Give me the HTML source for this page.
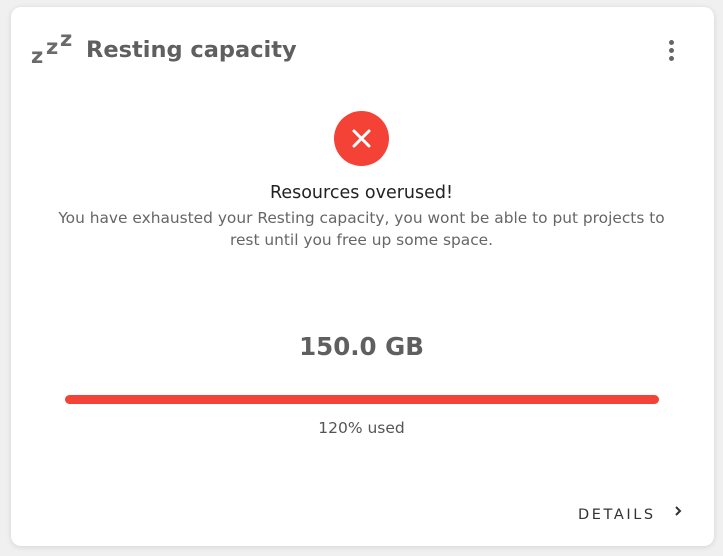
<!DOCTYPE html>
<html><head><style>
html,body{margin:0;padding:0;}
body{width:723px;height:556px;background:#f0f0f0;font-family:"DejaVu Sans",sans-serif;position:relative;overflow:hidden;}
.card{position:absolute;left:11px;top:7px;width:703px;height:539px;background:#fff;border-radius:10px;box-shadow:0 1px 6px rgba(0,0,0,0.12);}
.title{position:absolute;left:86px;top:37px;font-size:22.5px;font-weight:bold;color:#5f5f5f;}
.zz{position:absolute;color:#6a6a6a;font-weight:bold;font-family:"DejaVu Sans",sans-serif;}
.dots{position:absolute;left:669px;top:40px;}
.dots i{display:block;width:5px;height:5px;border-radius:50%;background:#666;margin-bottom:3px;}
.circle{position:absolute;left:334px;top:111px;width:55px;height:55px;border-radius:50%;background:#f44336;}
.h{position:absolute;left:0;width:723px;text-align:center;}
.bar{position:absolute;left:65px;top:395px;width:594px;height:9px;border-radius:5px;background:#f44336;}
</style></head><body>
<div class="card"></div>
<span class="zz" style="left:31px;top:44px;font-size:21px;">z</span>
<span class="zz" style="left:46px;top:35px;font-size:21px;">z</span>
<span class="zz" style="left:60px;top:27px;font-size:21px;">z</span>
<div class="title">Resting capacity</div>
<div class="dots"><i></i><i></i><i></i></div>
<div class="circle"><svg width="55" height="55" viewBox="0 0 55 55"><path d="M20 20L35 35M35 20L20 35" stroke="#fff" stroke-width="3" stroke-linecap="round"/></svg></div>
<div class="h" style="top:183px;font-size:17.5px;color:#222;">Resources overused!</div>
<div class="h" style="top:207px;font-size:15.4px;color:#666;line-height:22px;">You have exhausted your Resting capacity, you wont be able to put projects to<br>rest until you free up some space.</div>
<div class="h" style="top:332px;font-size:24.5px;font-weight:bold;color:#5f5f5f;">150.0 GB</div>
<div class="bar"></div>
<div class="h" style="top:419px;font-size:15.5px;color:#555;">120% used</div>
<div style="position:absolute;left:578px;top:507px;font-size:14.5px;letter-spacing:2.6px;color:#333;">DETAILS</div>
<svg style="position:absolute;left:672px;top:504px" width="12" height="14" viewBox="0 0 12 14"><path d="M4 3L8 7L4 11" stroke="#333" stroke-width="2" fill="none"/></svg>
</body></html>
